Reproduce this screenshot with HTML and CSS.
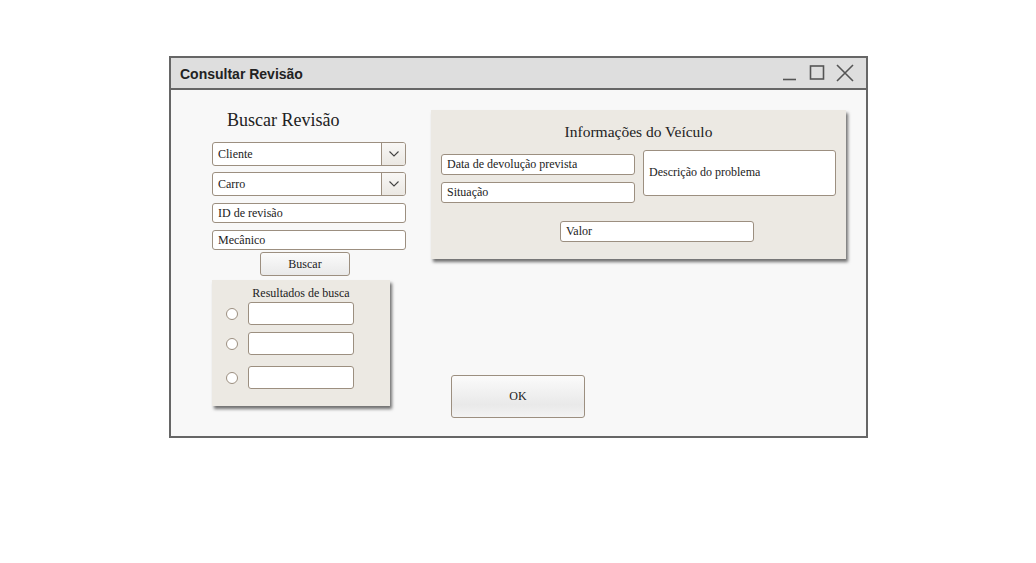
FILE: index.html
```html
<!DOCTYPE html>
<html lang="pt">
<head>
<meta charset="utf-8">
<title>Consultar Revisão</title>
<link rel="stylesheet" href="styles.css">
</head>
<body>
<div class="window">
  <div class="titlebar">
    <span class="title">Consultar Revisão</span>
    <div class="controls">
      <svg class="ctl" width="16" height="16" viewBox="0 0 16 16"><line x1="1" y1="14.5" x2="14" y2="14.5" stroke="#555" stroke-width="1.6"/></svg>
      <svg class="ctl" width="16" height="16" viewBox="0 0 16 16"><rect x="1.5" y="1" width="13" height="13" fill="none" stroke="#555" stroke-width="1.6"/></svg>
      <svg class="ctl" width="18" height="18" viewBox="0 0 18 18"><path d="M1 1 L17 17 M17 1 L1 17" stroke="#555" stroke-width="1.6" fill="none"/></svg>
    </div>
  </div>
  <div class="body">
    <div class="left">
      <h2 class="heading">Buscar Revisão</h2>
      <div class="select"><span class="select-text">Cliente</span><span class="select-btn"><svg width="12" height="8" viewBox="0 0 12 8"><path d="M1.5 1.5 L6 6 L10.5 1.5" stroke="#444" stroke-width="1.1" fill="none"/></svg></span></div>
      <div class="select"><span class="select-text">Carro</span><span class="select-btn"><svg width="12" height="8" viewBox="0 0 12 8"><path d="M1.5 1.5 L6 6 L10.5 1.5" stroke="#444" stroke-width="1.1" fill="none"/></svg></span></div>
      <div class="field">ID de revisão</div>
      <div class="field">Mecânico</div>
      <div class="btn-buscar">Buscar</div>
      <div class="results">
        <div class="results-title">Resultados de busca</div>
        <div class="res-row r1"><span class="radio"></span><span class="res-input"></span></div>
        <div class="res-row r2"><span class="radio"></span><span class="res-input"></span></div>
        <div class="res-row r3"><span class="radio"></span><span class="res-input"></span></div>
      </div>
    </div>
    <div class="right">
      <div class="info">
        <div class="info-title">Informações do Veículo</div>
        <div class="info-grid">
          <div class="info-col">
            <div class="field wide">Data de devolução prevista</div>
            <div class="field wide">Situação</div>
          </div>
          <div class="field desc">Descrição do problema</div>
        </div>
        <div class="field valor">Valor</div>
      </div>
      <div class="btn-ok">OK</div>
    </div>
  </div>
</div>
</body>
</html>
```
FILE: styles.css
```css
html, body {
  margin: 0;
  padding: 0;
  background: #ffffff;
}
body {
  font-family: "Liberation Serif", "Times New Roman", serif;
  color: #222;
}
.window {
  box-sizing: border-box;
  width: 699px;
  height: 382px;
  margin: 56px 0 0 169px;
  border: 2px solid #666666;
  background: #f8f8f8;
  display: flex;
  flex-direction: column;
}
.titlebar {
  height: 30px;
  background: #dedede;
  border-bottom: 2px solid #666666;
  display: flex;
  align-items: center;
  justify-content: space-between;
  padding: 0 12px 0 9px;
}
.title {
  font-family: "Liberation Sans", Arial, sans-serif;
  font-weight: bold;
  font-size: 14px;
  color: #222;
  margin-top: 1px;
}
.controls {
  display: flex;
  align-items: center;
  gap: 11px;
}
.ctl { display: block; }
.body {
  display: flex;
  gap: 25px;
  padding: 20px 0 0 41px;
}
.left {
  width: 194px;
  display: flex;
  flex-direction: column;
}
.heading {
  margin: 0 0 12px 15px;
  font-weight: normal;
  font-size: 18px;
  line-height: 20px;
  color: #222;
}
.select {
  box-sizing: border-box;
  height: 24px;
  border: 1px solid #9c8f80;
  border-radius: 3px;
  background: #fff;
  display: flex;
  margin-bottom: 6px;
  overflow: hidden;
}
.select + .field { margin-top: 1px; }
.select-text {
  flex: 1;
  font-size: 12px;
  line-height: 22px;
  padding-left: 5px;
}
.select-btn {
  width: 23px;
  border-left: 1px solid #9c8f80;
  background: linear-gradient(#f8f7f5, #ebe8e3);
  display: flex;
  align-items: center;
  justify-content: center;
}
.field {
  box-sizing: border-box;
  height: 20px;
  border: 1px solid #9c8f80;
  border-radius: 3px;
  background: #fff;
  font-size: 12px;
  line-height: 18px;
  padding-left: 5px;
  margin-bottom: 7px;
}
.btn-buscar {
  box-sizing: border-box;
  width: 90px;
  height: 24px;
  margin: -5px 0 4px 48px;
  border: 1px solid #9c8f80;
  border-radius: 3px;
  background: linear-gradient(#fbfbfb, #e9e9e9);
  text-align: center;
  font-size: 12px;
  line-height: 22px;
}
.results {
  box-sizing: border-box;
  width: 178px;
  height: 126px;
  background: #ece9e3;
  box-shadow: 2px 3px 3px rgba(0,0,0,0.55);
  padding-top: 6px;
}
.results-title {
  text-align: center;
  font-size: 12px;
  line-height: 14px;
  margin-bottom: 2px;
}
.res-row {
  display: flex;
  align-items: center;
  padding-left: 14px;
  gap: 10px;
}
.r2 { margin-top: 7px; }
.r3 { margin-top: 11px; }
.radio {
  box-sizing: border-box;
  width: 12px;
  height: 12px;
  border-radius: 50%;
  border: 1px solid #9c8f80;
  background: #fff;
}
.res-input {
  box-sizing: border-box;
  width: 106px;
  height: 23px;
  border: 1px solid #9c8f80;
  border-radius: 3px;
  background: #fff;
}
.right {
  width: 415px;
  display: flex;
  flex-direction: column;
}
.info {
  box-sizing: border-box;
  height: 149px;
  background: #ece9e3;
  box-shadow: 2px 3px 3px rgba(0,0,0,0.55);
  padding: 12px 10px 0 10px;
}
.info-title {
  text-align: center;
  font-size: 15.5px;
  line-height: 20px;
  margin-bottom: 0;
}
.info-grid {
  display: flex;
  gap: 8px;
  align-items: flex-start;
  margin-top: 8px;
}
.info-col {
  padding-top: 4px;
}
.field.wide {
  width: 194px;
  height: 21px;
  margin-bottom: 7px;
}
.field.desc {
  width: 194px;
  height: 46px;
  line-height: 42px;
  padding-left: 5px;
  margin-bottom: 0;
}
.field.valor {
  width: 194px;
  height: 21px;
  margin: 11px 0 0 119px;
}
.btn-ok {
  box-sizing: border-box;
  width: 134px;
  height: 43px;
  margin: 116px 0 0 20px;
  border: 1px solid #9c8f80;
  border-radius: 3px;
  background: linear-gradient(#fbfbfb, #e9e9e9 70%, #f3f3f3);
  text-align: center;
  font-size: 12px;
  line-height: 41px;
}
```
